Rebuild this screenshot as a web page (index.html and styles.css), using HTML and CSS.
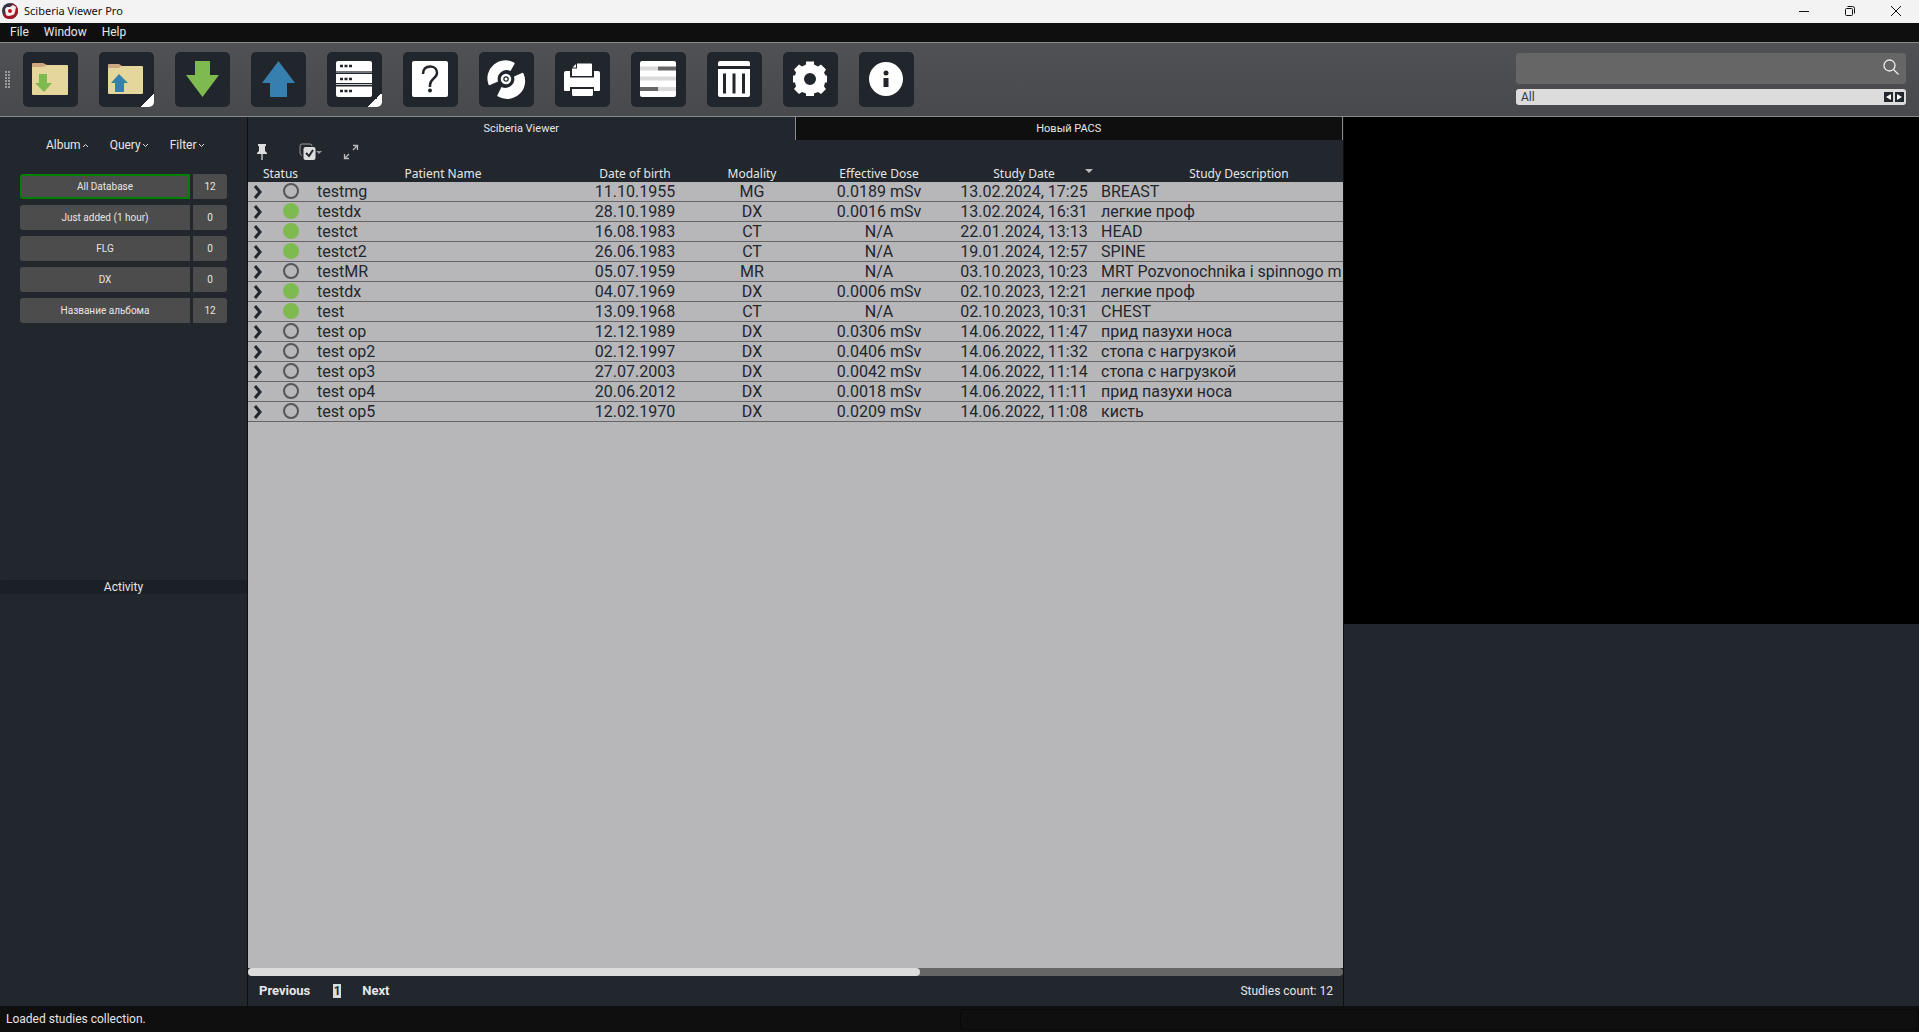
FILE: index.html
```html
<!DOCTYPE html>
<html lang="en">
<head>
<meta charset="utf-8">
<title>Sciberia Viewer Pro</title>
<link rel="stylesheet" href="styles.css">
</head>
<body>
<header class="titlebar">
  <svg class="logo" viewBox="0 0 16 16" width="16" height="16"><circle cx="8" cy="8" r="8" fill="#3a3546"/><path d="M8 0a8 8 0 0 1 0 16L3 15 1 12 12 3z" fill="#a31923"/><path d="M5 4q-2 1-2 3l1 5q1 1 3 1l4-1q2-1 2-3l1-5-3-2-3 2z" fill="#f0ecec"/><circle cx="8" cy="8" r="3" fill="#fff"/><circle cx="8" cy="8" r="2" fill="#c4101c"/></svg>
  <h1 class="app-name">Sciberia Viewer Pro</h1>
  <div class="window-buttons">
    <button class="window-button" aria-label="Minimize"><svg viewBox="0 0 12 12" width="12" height="12"><path d="M1 6.500h10" stroke="#111"/></svg></button>
    <button class="window-button" aria-label="Restore"><svg viewBox="0 0 12 12" width="12" height="12" fill="none" stroke="#111"><rect x="1.500" y="3.500" width="7" height="7" rx="1"/><path d="M3.500 1.500h5a2 2 0 0 1 2 2v5"/></svg></button>
    <button class="window-button" aria-label="Close"><svg viewBox="0 0 12 12" width="12" height="12"><path d="M1 1l10 10M11 1L1 11" stroke="#111"/></svg></button>
  </div>
</header>

<nav class="menubar">
  <button class="menu-item">File</button>
  <button class="menu-item">Window</button>
  <button class="menu-item">Help</button>
</nav>

<div class="toolbar">
  <svg class="grip" viewBox="0 0 6 18" width="6" height="18"><path d="M1 0v18M4 0v18" stroke="#9a9a9a" stroke-width="2" stroke-dasharray="2 1"/></svg>
  <div class="tools">
    <button class="tool" aria-label="Import folder"><svg viewBox="0 0 55 55"><path d="M9 12q0-1 1-1h10l4 2v4H9z" fill="#cfa77e"/><path d="M9 15h11l4-2h20q1 0 1 1v28q0 1-1 1H10q-1 0-1-1z" fill="#e5d69c"/><path d="M16 22h8v9h5l-8 9-9-9h4z" fill="#7fba50"/></svg></button>
    <button class="tool tool-menu" aria-label="Export folder"><svg viewBox="0 0 55 55"><path d="M9 13q0-1 1-1h10l3 2v4H9z" fill="#cfa77e"/><path d="M9 16h11l3-2h20q1 0 1 1v26q0 1-1 1H10q-1 0-1-1z" fill="#e5d69c"/><path d="M20 22l9 9h-4v9h-9v-9h-4z" fill="#377fae"/></svg></button>
    <button class="tool" aria-label="Download"><svg viewBox="0 0 55 55"><path d="M20 9h15v14h9L27.500 45 11 23h9z" fill="#7fba50"/></svg></button>
    <button class="tool" aria-label="Upload"><svg viewBox="0 0 55 55"><path d="M27.500 9L44 31h-8v14H19V31h-8z" fill="#377fae"/></svg></button>
    <button class="tool tool-menu" aria-label="Servers"><svg viewBox="0 0 55 55"><path d="M11 9h32q2 0 2 2v8H9v-8q0-2 2-2zM9 22h36v9H9zM9 34.500h36V43q0 2-2 2H11q-2 0-2-2z" fill="#fff"/><path d="M9 20h36M9 32.500h36" stroke="#c4c7ca"/><path d="M13 14h12M13 27h12M13 39h12" stroke="#20262c" stroke-width="2.500" stroke-dasharray="3 1.500"/></svg></button>
    <button class="tool" aria-label="Help"><svg viewBox="0 0 55 55"><rect x="9" y="9" width="36" height="36" rx="2" fill="#fff"/><path d="M20 22c0-5 3-7.500 7.500-7.500S34 18 34 21c0 5-7 6-7 12v2" fill="none" stroke="#20262c" stroke-width="2.500"/><circle cx="27" cy="38.500" r="2" fill="#20262c"/></svg></button>
    <button class="tool" aria-label="Burn disc"><svg viewBox="0 0 55 55"><path d="M9.500 32.500A18 18 0 0 1 35 10.500q1 .5.500 1.500L31.500 19a9 9 0 0 0-12.500 10.500l-8 3.500q-1 .5-1.500-.5zM44.500 21.500A18 18 0 0 1 19 44.500q-1-.5-.500-1.500L22.500 35a9 9 0 0 0 12.500-10.500l8-3.500q1-.5 1.500.5z" fill="#fff"/><circle cx="27" cy="27" r="4" fill="none" stroke="#fff" stroke-width="2.500"/><circle cx="27" cy="27" r="1.500" fill="#fff"/></svg></button>
    <button class="tool" aria-label="Print"><svg viewBox="0 0 55 55" fill="#fff"><path d="M22 11.500h14q1 0 1 1V24H17v-7.500h5zM17.500 15.500l3.500-3.500v3.500zM11 19h4v6.500h24V19h4q2 0 2 2v17q0 1-1 1h-5v-4H15v4h-5q-1 0-1-1V21q0-2 2-2zM17 37h21v5.500q0 1.500-1.500 1.500h-18q-1.500 0-1.500-1.500z"/></svg></button>
    <button class="tool" aria-label="Worklist"><svg viewBox="0 0 55 55"><rect x="9" y="9" width="36" height="36" rx="2" fill="#fff"/><path d="M9 14.500h18v4H9zM9 24.500h36v4H9zM27 35h18v4H27z" fill="#dadada"/><path d="M27 14.500h18v4H27zM9 35h18v4H9z" fill="#666"/></svg></button>
    <button class="tool" aria-label="Delete"><svg viewBox="0 0 55 55" fill="#fff"><path d="M13 9h28q2 0 2 2v3H11v-3q0-2 2-2zM11 17h32v26q0 2-2 2H13q-2 0-2-2zm5 4.500v20h3v-20zm9.500 0v20h3v-20zm9.500 0v20h3v-20z" fill-rule="evenodd"/></svg></button>
    <button class="tool" aria-label="Settings"><svg viewBox="0 0 55 55"><path d="M23 9.500h8v3l4 2 3-2 5 5-2 3 1.500 3H44v7h-2l-1 4 2 2.500-5 5-3-2-4 1.500v2.500h-8v-2.500l-4-1.500-3 2-5-5 2-2.500-1-4h-2v-7h2l1-3-2-3 5-5 3 2 4-2zM27 21a6 6 0 1 0 0 12 6 6 0 0 0 0-12z" fill="#fff" fill-rule="evenodd"/></svg></button>
    <button class="tool" aria-label="About"><svg viewBox="0 0 55 55"><circle cx="27" cy="27" r="17" fill="#fff"/><circle cx="27" cy="21" r="2.500" fill="#20262c"/><path d="M24.500 26h5v9h-5z" fill="#20262c"/></svg></button>
  </div>
  <form class="search">
    <div class="search-box">
      <input class="search-input" type="text" aria-label="Search">
      <button class="search-button" type="button" aria-label="Search"><svg viewBox="0 0 16 16" width="16" height="16" fill="none" stroke="#eee" stroke-width="1.300"><circle cx="6.500" cy="6.500" r="5.500"/><path d="M10.500 10.500l5 5"/></svg></button>
    </div>
    <div class="scope">
      <span class="scope-name">All</span>
      <button class="scope-step" type="button" aria-label="Previous field"><svg viewBox="0 0 9 10" width="9" height="10"><path d="M7 2v6L2 5z" fill="#fff"/></svg></button>
      <button class="scope-step" type="button" aria-label="Next field"><svg viewBox="0 0 9 10" width="9" height="10"><path d="M2 2v6l5-3z" fill="#fff"/></svg></button>
    </div>
  </form>
</div>

<main class="workspace">
  <aside class="sidebar">
    <section class="albums">
      <div class="album-menus">
        <button class="album-menu">Album<svg viewBox="0 0 7 5" width="7" height="5"><path d="M1 4l2.500-2.500L6 4"/></svg></button>
        <button class="album-menu">Query<svg viewBox="0 0 7 5" width="7" height="5"><path d="M1 1l2.500 2.500L6 1"/></svg></button>
        <button class="album-menu">Filter<svg viewBox="0 0 7 5" width="7" height="5"><path d="M1 1l2.500 2.500L6 1"/></svg></button>
      </div>
      <ul class="album-list">
        <li class="album"><button class="album-name album-current">All Database</button><span class="album-count">12</span></li>
        <li class="album"><button class="album-name">Just added (1 hour)</button><span class="album-count">0</span></li>
        <li class="album"><button class="album-name">FLG</button><span class="album-count">0</span></li>
        <li class="album"><button class="album-name">DX</button><span class="album-count">0</span></li>
        <li class="album"><button class="album-name">Название альбома</button><span class="album-count">12</span></li>
      </ul>
    </section>
    <section class="activity">
      <h2 class="activity-title">Activity</h2>
    </section>
  </aside>

  <section class="studies">
    <div class="tabs">
      <button class="tab tab-current">Sciberia Viewer</button>
      <button class="tab">Новый PACS</button>
    </div>
    <div class="list-tools">
      <button class="list-tool" aria-label="Pin"><svg viewBox="0 0 10 18" width="10" height="18"><path d="M1 1h8v2H8v5l2 2v1H0v-1l2-2V3H1z" fill="#ddd"/><path d="M5 11v6" stroke="#999" stroke-width="2"/></svg></button>
      <button class="list-tool" aria-label="Select"><svg viewBox="0 0 24 18" width="24" height="18"><path d="M3 12.500q-2-.5-2-2.500V3q0-2 2-2h8q2 0 2 2" fill="none" stroke="#999"/><rect x="4.500" y="4" width="12" height="13" rx="2" fill="#ddd"/><path d="M7 10l3 3 4-6" fill="none" stroke="#22262d" stroke-width="2"/><path d="M17 8h6l-3 3z" fill="#999"/></svg></button>
      <button class="list-tool" aria-label="Expand"><svg viewBox="0 0 16 16" width="16" height="16" fill="none" stroke="#bbb" stroke-width="1.300"><path d="M10 1.500h4.500V6M14 2l-4 4M1.500 10v4.500H6M2 14l4-4"/></svg></button>
    </div>
    <div class="table-area">
      <table class="study-table">
        <colgroup><col class="col-open"><col class="col-status"><col class="col-name"><col class="col-birth"><col class="col-modality"><col class="col-dose"><col class="col-date"><col class="col-description"><col class="col-rest"></colgroup>
        <thead>
          <tr><th colspan="2">Status</th><th>Patient Name</th><th>Date of birth</th><th>Modality</th><th>Effective Dose</th><th><span class="sorted">Study Date<svg viewBox="0 0 8 5" width="8" height="5"><path d="M0 0h8L4 4z" fill="#bbb"/></svg></span></th><th>Study Description</th><th></th></tr>
        </thead>
        <tbody id="study-rows"></tbody>
      </table>
    </div>
    <div class="scroll-track"><div class="scroll-thumb"></div></div>
    <footer class="pager">
      <button class="pager-step">Previous</button>
      <span class="pager-page">1</span>
      <button class="pager-step">Next</button>
      <span class="pager-total">Studies count: 12</span>
    </footer>
  </section>

  <section class="preview">
    <div class="preview-image"></div>
  </section>
</main>

<footer class="statusbar">
  <span class="status-text">Loaded studies collection.</span>
  <span class="status-progress"></span>
</footer>
<script src="studies.js"></script>
</body>
</html>
```
FILE: studies.js
```js
const studies = [
  [false, "testmg", "11.10.1955", "MG", "0.0189 mSv", "13.02.2024, 17:25", "BREAST"],
  [true, "testdx", "28.10.1989", "DX", "0.0016 mSv", "13.02.2024, 16:31", "легкие проф"],
  [true, "testct", "16.08.1983", "CT", "N/A", "22.01.2024, 13:13", "HEAD"],
  [true, "testct2", "26.06.1983", "CT", "N/A", "19.01.2024, 12:57", "SPINE"],
  [false, "testMR", "05.07.1959", "MR", "N/A", "03.10.2023, 10:23", "MRT Pozvonochnika i spinnogo m"],
  [true, "testdx", "04.07.1969", "DX", "0.0006 mSv", "02.10.2023, 12:21", "легкие проф"],
  [true, "test", "13.09.1968", "CT", "N/A", "02.10.2023, 10:31", "CHEST"],
  [false, "test op", "12.12.1989", "DX", "0.0306 mSv", "14.06.2022, 11:47", "прид пазухи носа"],
  [false, "test op2", "02.12.1997", "DX", "0.0406 mSv", "14.06.2022, 11:32", "стопа с нагрузкой"],
  [false, "test op3", "27.07.2003", "DX", "0.0042 mSv", "14.06.2022, 11:14", "стопа с нагрузкой"],
  [false, "test op4", "20.06.2012", "DX", "0.0018 mSv", "14.06.2022, 11:11", "прид пазухи носа"],
  [false, "test op5", "12.02.1970", "DX", "0.0209 mSv", "14.06.2022, 11:08", "кисть"]
];

const chevron = '<svg viewBox="0 0 10 14" width="10" height="14"><path d="M2 1l5 6-5 6" fill="none" stroke="#22262d" stroke-width="3"/></svg>';

document.getElementById("study-rows").innerHTML = studies.map(([done, ...cells]) =>
  `<tr><td class="cell-open"><button class="open" aria-label="Expand">${chevron}</button></td>` +
  `<td class="cell-status"><span class="status ${done ? "status-done" : ""}"></span></td>` +
  cells.map((text, i) => `<td class="${i === 0 || i === 5 ? "cell-left" : ""}">${text}</td>`).join("") +
  "<td></td></tr>"
).join("");
```
FILE: styles.css
```css
* { box-sizing: border-box; }

body {
  margin: 0;
  min-height: 100vh;
  display: flex;
  flex-direction: column;
  background: #0f0f0f;
  color: #e6e6e6;
  font: 12px/16px Roboto, sans-serif;
}

button {
  margin: 0;
  padding: 0;
  border: 0;
  background: none;
  color: inherit;
  font: inherit;
}

svg { display: block; }

/* Title bar and menu */
.titlebar {
  display: flex;
  align-items: center;
  height: 23px;
  padding: 0 0 2px 2px;
  gap: 6px;
  background: #f3f3f3;
  color: #111;
}
.app-name {
  margin: 0;
  flex: 1;
  font: 11px/16px "Noto Sans", sans-serif;
}
.window-buttons { display: flex; }
.window-button {
  width: 46px;
  height: 20px;
  display: grid;
  place-items: center;
}
.menubar {
  display: flex;
  height: 19px;
  padding: 0 10px 2px;
  gap: 15px;
  background: #0f0f0f;
}

/* Toolbar */
.toolbar {
  display: flex;
  align-items: center;
  height: 75px;
  padding: 0 13px 0 5px;
  border-top: 1px solid #8a8b8d;
  border-bottom: 1px solid #8a8b8d;
  background: linear-gradient(#505154, #48494c);
}
.grip { margin-right: 12px; }
.tools { display: flex; gap: 21px; }
.tool {
  position: relative;
  width: 55px;
  height: 55px;
  border-radius: 5px;
  background: #20262c;
  overflow: hidden;
}
.tool-menu::after {
  content: "";
  position: absolute;
  right: 0;
  bottom: 0;
  width: 14px;
  height: 14px;
  background: linear-gradient(135deg, transparent 50%, #fff 50%);
}
.search {
  width: 390px;
  margin-left: auto;
  padding-bottom: 2px;
  display: flex;
  flex-direction: column;
  gap: 5px;
}
.search-box {
  display: flex;
  align-items: center;
  height: 31px;
  padding: 0 7px 2px 0;
  border-radius: 3px;
  background: #666;
}
.search-input {
  flex: 1;
  height: 29px;
  border: 0;
  padding: 0 5px;
  background: none;
  color: #fff;
  font: inherit;
}
.scope {
  display: flex;
  align-items: center;
  gap: 2px;
  height: 16px;
  padding: 0 2px 0 5px;
  border-radius: 3px;
  background: #dcdcdc;
  color: #33373f;
}
.scope-name { flex: 1; }
.scope-step { background: #22262d; }

/* Workspace */
.workspace {
  flex: 1;
  display: grid;
  grid-template-columns: 248px minmax(0, 1096fr) minmax(0, 575fr);
  background: #22262d;
}
.sidebar {
  display: grid;
  grid-template-rows: 463fr 426fr;
  border-right: 1px solid #0f0f0f;
}
.albums { padding: 20px 20px 0; }
.album-menus {
  display: flex;
  gap: 21px;
  padding-left: 26px;
}
.album-menu {
  display: flex;
  align-items: center;
  gap: 1px;
}
.album-menu svg { fill: none; stroke: #ddd; }
.album-list {
  display: grid;
  gap: 6px;
  margin: 21px 0 0;
  padding: 0;
  list-style: none;
  font-size: 10px;
}
.album { display: flex; gap: 3px; }
.album-name {
  flex: 1;
  height: 25px;
  border-radius: 3px 0 0 3px;
  background: #4c4c4c;
}
.album-current { border: 2px solid #008000; }
.album-count {
  width: 34px;
  line-height: 25px;
  border-radius: 0 3px 3px 0;
  background: #4c4c4c;
  text-align: center;
}
.activity-title {
  margin: 0;
  border-radius: 3px;
  background: #1b1f26;
  font: 12px/14px Roboto, sans-serif;
  text-align: center;
}

/* Study list */
.studies {
  display: flex;
  flex-direction: column;
  border-right: 1px solid #0f0f0f;
}
.tabs { display: flex; }
.tab {
  flex: 1;
  height: 23px;
  border-right: 1px solid #8a8b8d;
  background: #0f0f0f;
  font-size: 11px;
}
.tab-current { background: #22262d; }
.list-tools {
  display: flex;
  align-items: center;
  height: 24px;
  padding-left: 9px;
}
.list-tool:nth-child(2) { margin-left: 32px; }
.list-tool:nth-child(3) { margin-left: 20px; }
.table-area {
  flex: 1;
  overflow: hidden;
  background: linear-gradient(#22262d 18px, #b7b7b9 18px);
}
.study-table {
  width: 1784px;
  table-layout: fixed;
  border-collapse: separate;
  border-spacing: 0;
  font-size: 16px;
  line-height: 18px;
  color: #22262d;
}
.col-open { width: 28px; }
.col-status { width: 37px; }
.col-name { width: 260px; }
.col-birth { width: 124px; }
.col-modality { width: 110px; }
.col-dose { width: 144px; }
.col-date { width: 146px; }
.col-description { width: 284px; }
.study-table th {
  height: 18px;
  padding: 2px 0 0;
  color: #e6e6e6;
  font: 12px/16px "Noto Sans", sans-serif;
}
.sorted { position: relative; }
.sorted svg {
  position: absolute;
  left: 100%;
  top: 4px;
  margin-left: 30px;
}
.study-table td {
  height: 20px;
  padding: 1px 0 0;
  border-bottom: 1px solid #666668;
  text-align: center;
  white-space: nowrap;
}
.study-table .cell-left { text-align: left; padding-left: 4px; }
.study-table .cell-status { padding: 0; vertical-align: top; }
.open { display: block; margin-left: 5px; }
.status {
  display: block;
  width: 16px;
  height: 16px;
  margin: 1px 0 0 7px;
  border: 2px solid #55565a;
  border-radius: 50%;
}
.status-done { border-color: #7fba50; background: #7fba50; }
.scroll-track { height: 8px; border-radius: 4px; background: #666; }
.scroll-thumb { width: 61.4%; height: 8px; border-radius: 4px; background: #dcdcdc; }
.pager {
  display: flex;
  align-items: center;
  height: 30px;
  padding: 0 10px 0 11px;
}
.pager-step { font-weight: 700; font-size: 13px; }
.pager-page {
  width: 8px;
  margin: 0 21px 0 23px;
  background: #dcdcdc;
  color: #22262d;
  font-weight: 700;
  line-height: 14px;
  text-align: center;
}
.pager-total { margin-left: auto; }

/* Preview */
.preview {
  display: grid;
  grid-template-rows: 507fr 382fr;
}
.preview-image { background: #000; }

/* Status bar */
.statusbar {
  display: grid;
  grid-template-columns: 1fr 1fr;
  height: 26px;
  padding: 3px 0 2px;
}
.status-text { padding: 2px 6px; }
.status-progress { border: 1px solid #090909; border-radius: 3px; }
```
